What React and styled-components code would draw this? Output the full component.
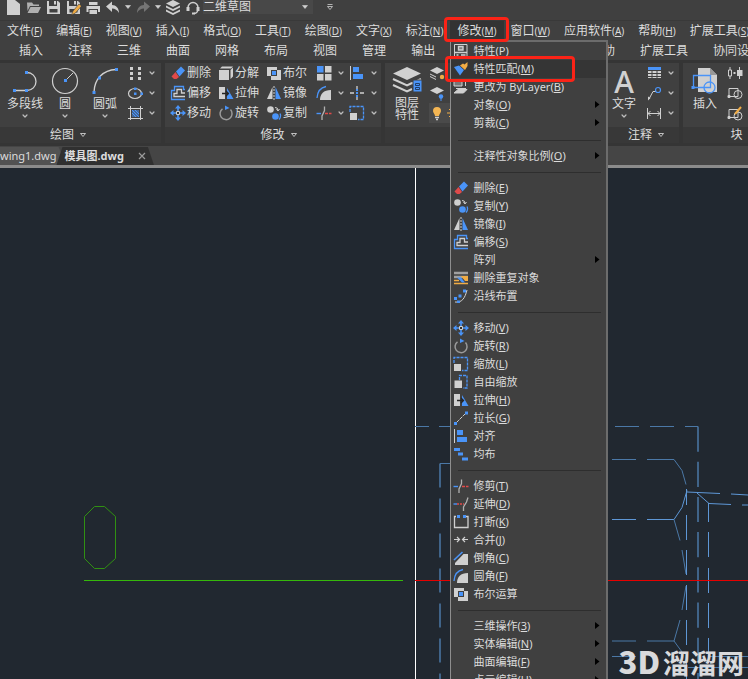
import React from 'react';
import styled, { createGlobalStyle } from 'styled-components';

const colors = {
  bar: '#404040',
  barDark: '#353535',
  title: '#383838',
  text: '#dcdcdc',
  icon: '#d0d0d0',
  blue: '#4a94f8',
  orange: '#f0ac45',
  red: '#e04a4a',
  mark: '#fb2317',
  canvas: '#212830',
  line: '#4b78a6',
  lineHi: '#5e97d6',
};

const GlobalStyle = createGlobalStyle`
  * { box-sizing: border-box; }
  body { margin: 0; background: ${colors.canvas}; }
  body, button, select {
    font-family: "Noto Sans", "Noto Sans CJK SC", sans-serif;
    font-size: 12px;
    color: ${colors.text};
  }
  button { padding: 0; border: 0; background: none; }
`;

const c = colors.icon;
const b = colors.blue;

// 16 x 16 glyphs shared by the ribbon and the menu
const glyphs = {
  erase: (
    <>
      <path d="M6 6.500 11 1.500 15 5.500 9.500 11.500z" fill={b} />
      <path d="M5.500 7 9 12 6.500 14 4 14 1.500 11.500z" fill={colors.red} />
    </>
  ),
  explode: (
    <>
      <path d="M1 5h10v10H1z" fill={c} />
      <path d="M2 3.500 4 1.500h11L13 3.500zM12.500 5 15 2.500v9L12.500 14z" fill={c} />
    </>
  ),
  bool: (
    <>
      <path d="M1 2h10v3h4v10H5v-4H1z" fill={c} />
      <path d="M5 5h6v6H5z" fill={colors.bar} />
      <path d="M6 6h4v4H6z" fill={b} />
    </>
  ),
  offset: (
    <g fill="none" strokeWidth="1.3">
      <path d="M15 4.500h-1.500V1.500H4.500v4H1.500v9H15" stroke={b} />
      <path d="M15 11.500H4V8.500h3v-4h4.500v3.500H15" stroke={c} />
    </g>
  ),
  stretch: (
    <>
      <path d="M1 2h6v12H1z" fill={c} />
      <path d="M9 3v11h6.500z" fill={b} />
      <path d="M4 8.500h6M8 6l2.500 2.500L8 11" stroke="#252525" strokeWidth="1.3" fill="none" />
    </>
  ),
  mirror: (
    <>
      <path d="M6.500 2v12H1z" fill={c} />
      <path d="M9.500 2v12H15z" fill={b} />
      <path d="M8 1v14" stroke={c} strokeDasharray="2 1" />
    </>
  ),
  move: (
    <>
      <path d="M8 2v12M2 8h12" stroke={b} strokeWidth="1.6" />
      <path d="M8 0 11 3.500H5zM8 16l3-3.500H5zM0 8l3.500-3v6zM16 8l-3.500-3v6z" fill={b} />
      <path d="M6.500 6.500h3v3h-3z" fill="#303030" stroke={c} />
    </>
  ),
  rotate: (
    <>
      <path d="M4.500 3.800A6 6 0 1 0 12.500 4.600" stroke="#9a9a9a" strokeWidth="1.500" fill="none" />
      <path d="M7 0.500 11.500 3 7 5z" fill={b} />
    </>
  ),
  copy: (
    <>
      <circle cx="4.500" cy="4.500" r="3.300" fill={c} />
      <circle cx="9.500" cy="11.500" r="3.300" fill={b} />
      <path d="M9 2.500q3 0 3 2.500M10.500 4l1.500 2 1.500-2" stroke={c} fill="none" />
      <path d="M14 8.500q1.500 3-1 6" stroke={b} strokeWidth="1.300" fill="none" />
    </>
  ),
  array: (
    <>
      <path d="M1 1h6.500v6.500H1z" fill={b} />
      <path d="M9 1h6.500v6.500H9zM1 9h6.500v6.500H1zM9 9h6.500v6.500H9z" fill={c} />
    </>
  ),
  align: (
    <>
      <path d="M1.500 1v14" stroke={c} />
      <path d="M4 2h6v5H4zM4 9h10v5H4z" fill={b} />
    </>
  ),
  fillet: (
    <>
      <path d="M1 13C1.500 6 5 2.500 10 1.500" stroke={b} fill="none" strokeWidth="1.300" />
      <path d="M4 15c0-6 3.500-10 11-10v10z" fill={c} />
    </>
  ),
  chamfer: (
    <>
      <path d="M1 10 9.500 2" stroke={b} strokeWidth="1.600" />
      <path d="M2 15v-2L10.500 4H15v11z" fill={c} />
    </>
  ),
  point: (
    <>
      <path d="M8 1v3M8 12v3M1 8h4M11 8h4" stroke={c} strokeWidth="1.300" />
      <path d="M8 4v2M8 10v2M7 8h2" stroke={b} strokeWidth="2" />
    </>
  ),
  trim: (
    <>
      <path d="M0.500 8.500H5" stroke={b} strokeWidth="1.400" />
      <path d="M9 8.500h6.500" stroke={colors.red} strokeWidth="1.400" strokeDasharray="3 1" />
      <path d="M8.500 1.500v4L6 11v4" stroke="#b0b0b0" fill="none" strokeWidth="1.300" />
    </>
  ),
  extend: (
    <>
      <path d="M0.500 8H4" stroke={b} strokeWidth="1.400" />
      <path d="M4 8h7" stroke={colors.red} strokeWidth="1.400" strokeDasharray="2 1" />
      <path d="M15 1.500 13.500 6 10.500 11v4" stroke="#b0b0b0" fill="none" strokeWidth="1.300" />
    </>
  ),
  scale: (
    <>
      <path d="M1 7V1.500h13.500v13H9" stroke={b} strokeWidth="1.300" strokeDasharray="3 1" fill="none" />
      <path d="M1 8h7v7H1z" fill={c} />
    </>
  ),
  freeScale: (
    <>
      <path d="M6.500 6V1.500h7.500v12.500H10" stroke={b} strokeWidth="1.300" strokeDasharray="3 1" fill="none" />
      <path d="M1.500 6.500h7.500v7.500H1.500z" fill={c} />
    </>
  ),
  lengthen: (
    <>
      <path d="M3 13 13 3" stroke={c} strokeDasharray="4 1" />
      <path d="M1 12h3v3H1zM12 1.500h3v3h-3z" fill={b} />
    </>
  ),
  distribute: <path d="M1 2h6v3H1zM5 6.500h5v3H5zM9 11.500h6v3H9z" fill={b} />,
  breakLine: (
    <>
      <path d="M3 2.500H1.500v11h13.500v-11H13" stroke={c} strokeWidth="1.300" fill="none" />
      <path d="M4 1h3v3H4zM10 1h3v3h-3z" fill={b} />
    </>
  ),
  join: <path d="M1 7.500h5.500M4 5 6.500 7.500 4 10M15 7.500H9.500M12 5 9.500 7.500l2.500 2.500" stroke={c} fill="none" strokeWidth="1.200" />,
  props: (
    <>
      <path d="M1.500 1.500h12.500v13H1.500z" fill="none" stroke={c} />
      <path d="M5.500 3.500h4.500v3.500H5.500zM2 9.500h12M3.500 12h2M8 12h4.500" stroke={c} fill="#808080" strokeWidth="1.400" />
    </>
  ),
  match: (
    <>
      <path d="M1 6 6 4.500 11 9l-4 5.500z" fill={b} />
      <path d="M7 4.500 10 2.500l1.500 1L14.500 1v4l-2.500 4z" fill={colors.orange} />
    </>
  ),
  byLayer: (
    <>
      <path d="M1 2h8v5H1z" fill="#777" stroke={c} />
      <path d="M12.500 1v6M3 9.500h10M1 14l4-3.500h9L10.500 14z" stroke={c} fill={c} />
    </>
  ),
  overkill: (
    <>
      <path d="M1 3h14M1 7h14" stroke="#a0a0a0" strokeWidth="2.400" />
      <path d="M1 10.500h5M1 13.500h14" stroke={colors.orange} strokeWidth="1.500" />
      <path d="M4 7.500h4l4 5H9z" fill={b} />
      <path d="M8 6h7v5h-3z" fill={colors.orange} />
    </>
  ),
  alongPath: (
    <>
      <path d="M2 14C9 15 12 10 14 2" stroke={c} fill="none" />
      <path d="M1 9h3v3H1zM5.500 6.500h3v3h-3zM10 1.500h3v3h-3zM4 12.500h3v2.500H4z" fill={b} />
    </>
  ),
  divide: <path d="M3 2h3v3H3zM3 7h3v3H3zM3 12h3v3H3zM11 2h3v3h-3zM11 7h3v3h-3zM11 12h3v3h-3z" fill={c} />,
  ellipse: (
    <>
      <ellipse cx="8" cy="8.500" rx="6.500" ry="5" stroke={c} fill="none" strokeWidth="1.200" />
      <path d="M7 2.500h2.500V5H7zM7 7.500h2.500V10H7zM13.500 7.500H16V10h-2.500z" fill={b} />
    </>
  ),
  hatch: (
    <>
      <path d="M3.500 1v14M13.500 1v14M1 3.500h15M1 13.500h15" stroke={c} />
      <path d="M5 5h7v7H5z" fill="#42679b" />
      <path d="M5 8l4 4M5 5l7 7M8 5l4 4" stroke={b} />
    </>
  ),
  table: (
    <>
      <path d="M2 2h13v3H2z" fill={b} />
      <path d="M2 6h3.500v2H2zM6.500 6h4v2h-4zM11.500 6H15v2h-3.500zM2 9h3.500v2H2zM6.500 9h4v2h-4zM11.500 9H15v2h-3.500zM2 12h3.500v1H2zM6.500 12h4v1h-4zM11.500 12H15v1h-3.500z" fill={c} />
    </>
  ),
  leader: (
    <>
      <path d="M3 14 7 6.500h3" stroke={c} fill="none" />
      <path d="M2 15.500V11.500L4.500 13z" fill={c} />
      <circle cx="12" cy="5" r="2.500" stroke={b} fill="none" strokeWidth="1.200" />
    </>
  ),
  dimension: <path d="M1.500 3v11M14.500 3v11M2 8.500h12M4.500 6 2 8.500 4.500 11M11.500 6l2.500 2.500-2.500 2.500" stroke={c} fill="none" />,
  layerState: (
    <>
      <path d="M8 2l7 3.500-7 3.500-7-3.500z" fill={c} />
      <path d="M1 9l6 3M1 11.500l6 3" stroke={c} fill="none" />
      <circle cx="13" cy="12" r="2.200" fill={colors.orange} />
    </>
  ),
  layerFreeze: (
    <>
      <path d="M8 2l7 3.500-7 3.500-7-3.500z" fill={c} />
      <circle cx="12" cy="11.500" r="2.200" fill={b} />
      <path d="M12 13v3" stroke={b} />
    </>
  ),
  bulb: (
    <>
      <path d="M8 2a4 4 0 0 1 4 4c0 2-2 3-2 5H6c0-2-2-3-2-5a4 4 0 0 1 4-4z" fill="#f4b653" />
      <path d="M6 12.500h4M7 14.500h2" stroke={c} strokeWidth="1.400" />
    </>
  ),
  sun: (
    <>
      <circle cx="8" cy="8" r="3" fill={colors.orange} />
      <path d="M8 2v12M2 8h12M4 4l8 8M12 4l-8 8" stroke={colors.orange} />
    </>
  ),
  blockAttr: (
    <>
      <path d="M1.500 5h3v6h-3zM3 2v3M3 11v3M12.500 2v12" stroke={c} fill="none" />
      <path d="M10 5h5.500v6H10zM6.500 7h2v2h-2z" fill={c} />
    </>
  ),
  blockMake: (
    <g fill="none" stroke={c}>
      <path d="M2 3.500h9v8H2z" />
      <circle cx="11" cy="9.500" r="4" />
      <path d="M1 10.500h2v2H1z" fill={c} />
    </g>
  ),
  blockEdit: (
    <g fill="none" stroke={c}>
      <path d="M2 4.500h9v8H2z" />
      <circle cx="11" cy="11" r="4" />
      <path d="M1 11.500h2v2H1z" fill={c} />
      <path d="M8 9 14 2" stroke={colors.orange} strokeWidth="2" />
    </g>
  ),
  fileNew: <path d="M2 0h8l5 4v11H2z" fill={c} />,
  fileOpen: <path d="M2 2.500h5l1.500 2H14V6H5L2.500 11zM5.500 7H16l-3 6H2.500z" fill="#b0b0b0" />,
  save: <path d="M2 1h2v5h8V1h1l2 2v11H2zM9 1h2v3.500H9zM4.500 9v3.500h8V9z" fill={c} fillRule="evenodd" />,
  saveAs: (
    <>
      <path d="M2 1h2v5h8V1h1l2 2v11H2zM9 1h2v3.500H9zM4.500 9v3.500h8V9z" fill={c} fillRule="evenodd" />
      <path d="M6.500 15 8 11l6-7 2.500 2-6 7z" fill={colors.orange} stroke={colors.bar} strokeWidth="0.600" />
    </>
  ),
  print: <path d="M4 2h8.500v3H4zM1.500 6h13.500v6H13V9H3.500v3h-2zM4.500 10h7.500v4H4.500z" fill={c} />,
  undo: <path d="M1 6.500 7 1.500V5c4 0 7 3 7 8-1.500-3-4-4.500-7-4.500v3.500z" fill={c} />,
  redo: <path d="M15 6.500 9 1.500V5C5 5 2 8 2 13c1.500-3 4-4.500 7-4.500v3.500z" fill="#757575" />,
  layers: (
    <>
      <path d="M8 0l7 3.500L8 7 1 3.500z" fill={c} />
      <path d="M1 5.500 8 9l7-3.500v2L8 11 1 7.500zM1 9.500 8 13l7-3.500v2L8 15 1 11.500z" fill={c} />
    </>
  ),
  support: (
    <>
      <path d="M3 7.500a5 5 0 0 1 10 0M13 9q0 4-4 4.500" stroke={c} strokeWidth="1.400" fill="none" />
      <path d="M1.500 7h3v4h-3zM11.500 7h3v4h-3zM7 12.500h3v2H7z" fill={c} />
    </>
  ),
};

// 28 x 28 drawings of the large ribbon buttons
const bigGlyphs = {
  polyline: (
    <>
      <path d="M4 23.500h12a9 9 0 0 0 0-18" stroke={c} fill="none" strokeWidth="1.300" />
      <path d="M2 22h3v3H2zM14 22h3v3h-3zM14 4h3v3h-3z" fill={b} />
    </>
  ),
  circle: (
    <>
      <circle cx="14" cy="14" r="12.500" stroke={c} fill="none" strokeWidth="1.200" />
      <path d="M14.500 13.500 22 6" stroke={c} />
      <path d="M13 12h3v3h-3z" fill={b} />
    </>
  ),
  arc: (
    <>
      <path d="M3 25C3.500 12 12 3 25 2.500" stroke={c} fill="none" strokeWidth="1.300" />
      <path d="M1.500 24h3v3h-3zM7 9.500h3v3H7zM24 1h3v3h-3z" fill={b} />
    </>
  ),
  layerProps: (
    <>
      <path d="M14 0 28 6.500 14 13 0 6.500z" fill={c} />
      <path d="M0 12l14 6.500L19 16M0 18l14 6.500L19 22M19 16.500 28 12" stroke={c} fill="none" strokeWidth="2" />
      <path d="M20 13h9v12h-9z" fill={b} stroke={colors.bar} />
      <path d="M22.500 16.500h4v2h-4zM22.500 20.500h4v2h-4z" fill={b} stroke="#1f3f6b" />
    </>
  ),
  insert: (
    <>
      <path d="M7 1h12l7 7v17H7z" fill={c} />
      <path d="M19 1v7h7z" fill="#989898" />
      <path d="M2.500 8.500h17v12h-17z" stroke={b} fill="none" strokeWidth="1.300" />
      <circle cx="18.500" cy="20.500" r="5.500" stroke={b} fill="none" strokeWidth="1.300" />
      <path d="M0.500 19h3v3h-3z" fill={b} />
    </>
  ),
};

const Glyph = ({ name }) => (
  <svg width="16" height="16" viewBox="0 0 16 16" aria-hidden="true">{glyphs[name]}</svg>
);

const Chevron = ({ solid }) => (
  <svg width="8" height="6" viewBox="0 0 8 6" aria-hidden="true">
    <path d={solid ? 'M1.500 1.500h5L4 4.500z' : 'M2 1.500l2 2 2-2v1L4 4.500l-2-2z'} fill={c} stroke={c} strokeWidth="0.600" />
  </svg>
);

const TitleChevron = () => (
  <svg width="8" height="6" viewBox="0 0 8 6" aria-hidden="true">
    <path d="M1.500 1.500h5L4 4.500z" fill="none" stroke={c} strokeWidth="0.900" />
  </svg>
);

const Label = ({ text, mnemonic, small }) => (
  <span>
    {text}
    {mnemonic && <Mnemonic $small={small}>(<u>{mnemonic}</u>)</Mnemonic>}
  </span>
);

const quickActions = [
  ['新建', 'fileNew'], ['打开', 'fileOpen'], ['保存', 'save'], ['另存为', 'saveAs'], ['打印', 'print'],
  ['放弃', 'undo', true], ['重做', 'redo', true], ['图层', 'layers'], ['支持', 'support'],
];

const menus = [
  ['文件', 'F'], ['编辑', 'E'], ['视图', 'V'], ['插入', 'I'], ['格式', 'O'], ['工具', 'T'], ['绘图', 'D'],
  ['文字', 'X'], ['标注', 'N'], ['修改', 'M'], ['窗口', 'W'], ['应用软件', 'A'], ['帮助', 'H'], ['扩展工具', 'S'],
];

const tabs = ['插入', '注释', '三维', '曲面', '网格', '布局', '视图', '管理', '输出', '在线工具', 'Cloud', '帮助', '扩展工具', '协同设计'];

const modifyTools = [
  ['删除', 'erase'], ['分解', 'explode'], ['布尔', 'bool'],
  ['偏移', 'offset'], ['拉伸', 'stretch'], ['镜像', 'mirror'],
  ['移动', 'move'], ['旋转', 'rotate'], ['复制', 'copy'],
];

const menuGroups = [
  [
    { text: '特性', key: 'P', icon: 'props' },
    { text: '特性匹配', key: 'M', icon: 'match', active: true },
    { text: '更改为 ByLayer', key: 'B', icon: 'byLayer' },
    { text: '对象', key: 'O', sub: true },
    { text: '剪裁', key: 'C', sub: true },
  ],
  [{ text: '注释性对象比例', key: 'O', sub: true }],
  [
    { text: '删除', key: 'E', icon: 'erase' },
    { text: '复制', key: 'Y', icon: 'copy' },
    { text: '镜像', key: 'I', icon: 'mirror' },
    { text: '偏移', key: 'S', icon: 'offset' },
    { text: '阵列', sub: true },
    { text: '删除重复对象', icon: 'overkill' },
    { text: '沿线布置', icon: 'alongPath' },
  ],
  [
    { text: '移动', key: 'V', icon: 'move' },
    { text: '旋转', key: 'R', icon: 'rotate' },
    { text: '缩放', key: 'L', icon: 'scale' },
    { text: '自由缩放', icon: 'freeScale' },
    { text: '拉伸', key: 'H', icon: 'stretch' },
    { text: '拉长', key: 'G', icon: 'lengthen' },
    { text: '对齐', icon: 'align' },
    { text: '均布', icon: 'distribute' },
  ],
  [
    { text: '修剪', key: 'T', icon: 'trim' },
    { text: '延伸', key: 'D', icon: 'extend' },
    { text: '打断', key: 'K', icon: 'breakLine' },
    { text: '合并', key: 'J', icon: 'join' },
    { text: '倒角', key: 'C', icon: 'chamfer' },
    { text: '圆角', key: 'F', icon: 'fillet' },
    { text: '布尔运算', icon: 'bool' },
  ],
  [
    { text: '三维操作', key: '3', sub: true },
    { text: '实体编辑', key: 'N', sub: true },
    { text: '曲面编辑', key: 'F', sub: true },
    { text: '点云编辑', key: 'U', sub: true },
  ],
];

function ModifyMenu() {
  return (
    <Dropdown role="menu">
      {menuGroups.map((group, i) => (
        <React.Fragment key={i}>
          {i > 0 && <Separator />}
          {group.map((item) => (
            <MenuItem key={item.text} role="menuitem" $active={item.active}>
              <MenuIcon>{item.icon && <Glyph name={item.icon} />}</MenuIcon>
              <Label text={item.text} mnemonic={item.key} />
              {item.sub && (
                <SubArrow width="5" height="8" viewBox="0 0 5 8" aria-hidden="true"><path d="M0 0 4.500 3.500 0 7z" /></SubArrow>
              )}
              {item.active && <ItemMark />}
            </MenuItem>
          ))}
        </React.Fragment>
      ))}
    </Dropdown>
  );
}

function BigTool({ label, icon, children, drop }) {
  return (
    <BigButton>
      {icon ? <svg width="28" height="28" viewBox="0 0 28 28" overflow="visible" aria-hidden="true">{bigGlyphs[icon]}</svg> : children}
      <BigLabel $double={Array.isArray(label)}>
        {Array.isArray(label) ? label.map((l) => <span key={l}>{l}</span>) : label}
      </BigLabel>
      {drop && <Chevron />}
    </BigButton>
  );
}

const DropTools = ({ icons, plain }) => (
  <ToolColumn>
    {icons.map((name) => (
      <DropButton key={name} aria-label={name}>
        <Glyph name={name} />
        {!plain && <ChevronBox><Chevron /></ChevronBox>}
      </DropButton>
    ))}
  </ToolColumn>
);

function Ribbon() {
  return (
    <RibbonBar>
      <Panel $width={161}>
        <PanelBody $pad={5}>
          <Group>
            <BigTool label="多段线" icon="polyline" drop />
            <BigTool label="圆" icon="circle" drop />
            <BigTool label="圆弧" icon="arc" drop />
          </Group>
          <DropTools icons={['divide', 'ellipse', 'hatch']} />
        </PanelBody>
        <PanelTitle $shift={36}>绘图<TitleChevron /></PanelTitle>
      </Panel>
      <Panel $width={216}>
        <PanelBody $pad={5}>
          <ToolGrid>
            {modifyTools.map(([text, icon]) => (
              <Tool key={text}><Glyph name={icon} />{text}</Tool>
            ))}
          </ToolGrid>
          <Group>
            <DropTools icons={['array', 'fillet', 'trim']} />
            <DropTools icons={['align', 'point', 'scale']} />
          </Group>
        </PanelBody>
        <PanelTitle>修改<TitleChevron /></PanelTitle>
      </Panel>
      <Panel $width={213}>
        <PanelBody $pad={2}>
          <BigTool label={['图层', '特性']} icon="layerProps" />
          <ToolColumn>
            <DropButton aria-label="图层状态"><Glyph name="layerState" /></DropButton>
            <DropButton aria-label="图层冻结"><Glyph name="layerFreeze" /></DropButton>
            <LayerBox aria-label="当前图层"><Glyph name="bulb" /><Glyph name="sun" /></LayerBox>
          </ToolColumn>
        </PanelBody>
        <PanelTitle>图层<TitleChevron /></PanelTitle>
      </Panel>
      <Panel $width={77}>
        <PanelBody $pad={2}>
          <BigTool label="文字" drop><TextGlyph>A</TextGlyph></BigTool>
          <DropTools icons={['table', 'leader', 'dimension']} />
        </PanelBody>
        <PanelTitle>注释<TitleChevron /></PanelTitle>
      </Panel>
      <Panel $width={116}>
        <PanelBody $pad={2}>
          <BigTool label="插入" icon="insert" />
          <DropTools icons={['blockAttr', 'blockMake', 'blockEdit']} plain />
        </PanelBody>
        <PanelTitle $shift={8}>块<TitleChevron /></PanelTitle>
      </Panel>
    </RibbonBar>
  );
}

function Drawing() {
  return (
    <DrawingSvg aria-label="模具图">
      <g transform="translate(0 -168)" fill="none">
        <path d="M415.500 168V2000" stroke="#fff" />
        <g stroke={colors.line}>
          <path d="M415 426.500h14M439 426.500h24M615 426.500h24M650 426.500h24M685 426.500h13" />
          <path d="M450 463.500H440" />
          <path d="M440 463.500V2000" strokeDasharray="24 11" strokeWidth="1.500" />
          <path d="M698 426.500V2000" strokeDasharray="25.200 10" strokeWidth="1.500" />
          <path d="M612 459.500h24M647 459.500h27l8 11 4 14M612 641h24M647 641h27l8 11" />
          <path d="M612 656.500h24M709 656.500h39M688 667.500h60" />
        </g>
        <g stroke={colors.lineHi}>
          <path d="M612 519.500h24M647 519.500h27l8-12 5-17M687 492l33 1.500M731 494l17 1M697 493l12 10.500 22 1M742 505h6" />
          <path d="M674 519.500l6 21M682 550l4 24M686 586l-4 24M680 620l-6 21" stroke={colors.line} />
          <path d="M686.500 489v16M686.500 515v25M686.500 550v25M686.500 585v25M686.500 620v25M686.500 655v24" />
          <path d="M708.500 503v19M708.500 532v25M708.500 568v25M708.500 603v25M708.500 638v25" />
        </g>
        <path d="M84.500 516.500 94.500 506.500h10l11 10v42l-11 10h-10l-10-10z" stroke="#309012" />
        <path d="M84 580.500h319" stroke="#35b80b" />
        <path d="M415 580.500H4000" stroke="#e60000" />
      </g>
    </DrawingSvg>
  );
}

export default function App() {
  return (
    <Page>
      <GlobalStyle />
      <QuickBar>
        {quickActions.map(([label, icon, drop]) => (
          <React.Fragment key={icon}>
            <QuickButton aria-label={label}><Glyph name={icon} /></QuickButton>
            {drop && <QuickDrop aria-label={`${label}列表`}><Chevron solid /></QuickDrop>}
          </React.Fragment>
        ))}
        <Workspace>
          <select aria-label="工作空间" defaultValue="二维草图">
            <option>二维草图</option>
          </select>
          <Chevron solid />
        </Workspace>
        <QuickDrop aria-label="自定义">
          <svg width="8" height="8" viewBox="0 0 8 8"><path d="M1.500 1.500h5M1.500 3.500h5L4 6.500z" stroke={c} strokeWidth="0.800" fill="none" /></svg>
        </QuickDrop>
      </QuickBar>

      <MenuBar>
        {menus.map(([text, key]) => (
          <MenuSlot key={text}>
            <MenuButton $open={text === '修改'}><Label text={text} mnemonic={key} small /></MenuButton>
            {text === '修改' && (
              <>
                <ModifyMenu />
                <MenuMark />
              </>
            )}
          </MenuSlot>
        ))}
      </MenuBar>

      <TabBar>
        <CurrentTab />
        {tabs.map((tab) => <Tab key={tab}>{tab}</Tab>)}
      </TabBar>

      <Ribbon />

      <FileTabs>
        <FileTab>wing1.dwg</FileTab>
        <FileTab $active>
          模具图.dwg
          <svg width="8" height="8" viewBox="0 0 8 8" aria-hidden="true"><path d="M1 1l6 6M7 1 1 7" stroke="#9a9a9a" strokeWidth="1.200" /></svg>
        </FileTab>
      </FileTabs>

      <Canvas>
        <Drawing />
        <Watermark><b>3D</b>溜溜网</Watermark>
      </Canvas>
    </Page>
  );
}

const Page = styled.div`
  display: flex;
  flex-direction: column;
  height: 100vh;
  overflow: hidden;
  background: ${colors.bar};
  white-space: nowrap;
`;

const QuickBar = styled.div`
  display: flex;
  align-items: center;
  padding: 0 0 6px 3px;
  border-bottom: 1px solid #393939;
`;

const QuickButton = styled.button`
  display: flex;
  justify-content: center;
  width: 20px;
  height: 14px;
`;

const QuickDrop = styled.button`
  display: flex;
  justify-content: center;
  align-items: center;
  width: 10px;
  height: 14px;
`;

const Workspace = styled.div`
  display: flex;
  align-items: center;
  width: 110px;
  height: 14px;
  margin-right: 12px;
  padding-right: 4px;
  background: #484848;
  select {
    flex: 1;
    height: 14px;
    padding: 0;
    border: 0;
    background: none;
    appearance: none;
    line-height: 14px;
  }
`;

const MenuBar = styled.nav`
  display: flex;
  height: 19px;
`;

const MenuSlot = styled.div`
  position: relative;
`;

const MenuButton = styled.button`
  height: 19px;
  padding: 0 7px;
  line-height: 18px;
  background: ${({ $open }) => ($open ? '#333' : 'none')};
`;

const Mnemonic = styled.span`
  font-size: ${({ $small }) => ($small ? '10px' : 'inherit')};
`;

const Mark = styled.span`
  position: absolute;
  border: 3px solid ${colors.mark};
  border-radius: 4px;
  pointer-events: none;
  z-index: 3;
`;

const MenuMark = styled(Mark)`
  inset: -4px -5px -2px -6px;
`;

const ItemMark = styled(Mark)`
  inset: -4px 31px -4px -6px;
`;

const Dropdown = styled.div`
  position: absolute;
  top: 100%;
  left: 0;
  z-index: 2;
  width: 158px;
  border: 2px solid #6c6c6c;
  border-left: 1px solid #8e8e8e;
  background: ${colors.bar};
`;

const MenuItem = styled.button`
  position: relative;
  display: flex;
  align-items: center;
  width: 100%;
  height: 18px;
  padding-right: 6px;
  font-size: 11px;
  line-height: 18px;
  background: ${({ $active }) => ($active ? '#353535' : 'none')};
`;

const MenuIcon = styled.span`
  display: flex;
  width: 22px;
  padding-left: 2px;
`;

const SubArrow = styled.svg`
  margin-left: auto;
  fill: #000;
`;

const Separator = styled.hr`
  height: 1px;
  margin: 7px 5px 6px 7px;
  border: 0;
  background: #2e2e2e;
  &:first-of-type { margin-top: 8px; }
`;

const TabBar = styled.nav`
  display: flex;
  gap: 25px;
  height: 20px;
`;

const CurrentTab = styled.span`
  width: 5px;
  margin: 3px -11px 0 0;
  margin-right: -6px;
  border-top-right-radius: 3px;
  background: ${colors.barDark};
`;

const Tab = styled.button`
  flex: none;
  line-height: 22px;
  &:first-of-type { margin-right: -5px; padding-right: 5px; }
`;

const RibbonBar = styled.div`
  display: flex;
  gap: 4px;
  padding: 3px 0;
  background: ${colors.barDark};
`;

const Panel = styled.section`
  flex: none;
  width: ${({ $width }) => $width}px;
  background: ${colors.bar};
`;

const PanelBody = styled.div`
  display: flex;
  gap: 2px;
  padding: 0 0 4px ${({ $pad }) => $pad}px;
`;

const PanelTitle = styled.div`
  display: flex;
  justify-content: center;
  align-items: center;
  gap: 5px;
  height: 16px;
  padding: 0 ${({ $shift = 0 }) => $shift}px 0 12px;
  line-height: 16px;
  background: ${colors.title};
`;

const Group = styled.div`
  display: flex;
`;

const BigButton = styled.button`
  display: flex;
  flex-direction: column;
  align-items: center;
  width: 40px;
  padding-top: 4px;
`;

const BigLabel = styled.span`
  display: flex;
  flex-direction: column;
  padding-top: ${({ $double }) => ($double ? '2px' : '0')};
  line-height: ${({ $double }) => ($double ? '12px' : '18px')};
`;

const TextGlyph = styled.span`
  height: 28px;
  font-size: 30px;
  font-weight: 500;
  line-height: 30px;
  color: ${c};
`;

const ToolColumn = styled.div`
  display: flex;
  flex-direction: column;
`;

const ToolGrid = styled.div`
  display: grid;
  grid-template-columns: repeat(3, 48px);
`;

const Tool = styled.button`
  display: flex;
  align-items: center;
  gap: 1px;
  height: 20px;
  line-height: 20px;
`;

const DropButton = styled.button`
  display: flex;
  align-items: center;
  height: 20px;
`;

const ChevronBox = styled.span`
  display: flex;
  justify-content: center;
  width: 17px;
`;

const LayerBox = styled.button`
  display: flex;
  align-items: center;
  width: 160px;
  height: 20px;
  background: #4a4a4a;
`;

const FileTabs = styled.div`
  display: flex;
  align-items: flex-end;
  height: 22px;
  border-bottom: 3px solid #8b8b8b;
  background: #454545;
`;

const FileTab = styled.button`
  display: flex;
  align-items: center;
  gap: 14px;
  height: 18px;
  margin-left: ${({ $active }) => ($active ? '-6px' : '0')};
  padding: ${({ $active }) => ($active ? '0 8px' : '0 6px 0 0')};
  font-size: 11px;
  font-weight: ${({ $active }) => ($active ? 700 : 400)};
  line-height: 18px;
  background: ${({ $active }) => ($active ? '#303030' : '#525252')};
  clip-path: ${({ $active }) => ($active
    ? 'polygon(6px 0, calc(100% - 6px) 0, 100% 100%, 0 100%)'
    : 'polygon(0 0, calc(100% - 4px) 0, 100% 50%, calc(100% - 2px) 100%, 0 100%)')};
`;

const Canvas = styled.main`
  position: relative;
  display: flex;
  flex: 1;
  min-height: 0;
  background: ${colors.canvas};
`;

const DrawingSvg = styled.svg`
  flex: 1;
  min-width: 0;
`;

const Watermark = styled.div`
  position: absolute;
  right: 4px;
  bottom: 0;
  font-family: "Noto Sans CJK SC", sans-serif;
  font-size: 27px;
  font-weight: 700;
  line-height: 32px;
  color: #d9dadc;
  b { margin-right: 3px; font-size: 31px; }
`;
